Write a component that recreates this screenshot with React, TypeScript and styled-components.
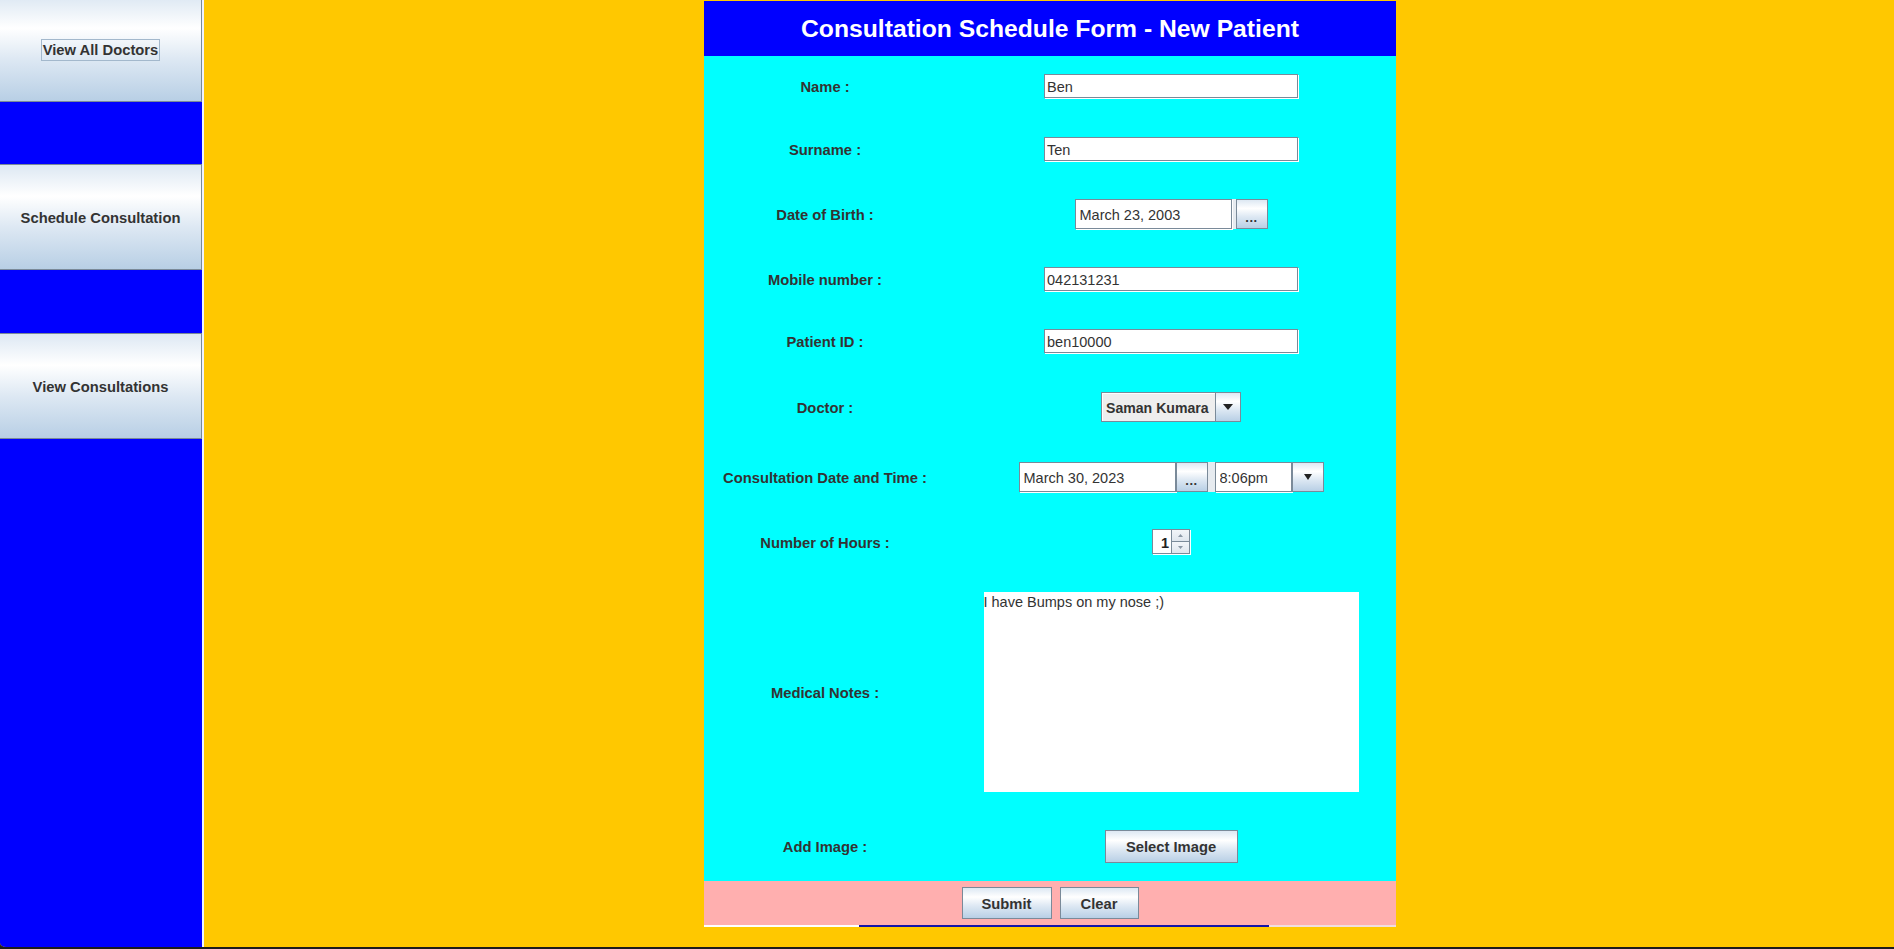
import React from "react";
import styled, { createGlobalStyle } from "styled-components";

const FONT = `"Liberation Sans", Arial, "DejaVu Sans", sans-serif`;

const GlobalStyle = createGlobalStyle`
  html, body { margin: 0; padding: 0; height: 100%; background: #1c1c1c; overflow: hidden; }
  #root { height: 100%; }
  *, *::before, *::after { box-sizing: border-box; }
`;

const OCEAN = `linear-gradient(to bottom, #dde8f3 0%, #ffffff 30%, #dde8f3 60%, #b8cfe5 100%)`;

const Frame = styled.div`
  display: flex;
  width: 1894px;
  height: 949px;
  border-bottom: 2px solid #1c1c1c;
  border-bottom-left-radius: 6px;
  overflow: hidden;
  background: #ffc800;
  font-family: ${FONT};
  color: #333333;
`;

const Sidebar = styled.nav`
  width: 204px;
  flex: none;
  background: #0000ff;
  border-right: 2px solid #eef2ff;
  display: flex;
  flex-direction: column;
  gap: 62px;
  margin-top: -4px;
`;

const NavButton = styled.div<{ $extra?: number }>`
  height: 106px;
  margin-top: ${(p) => p.$extra ?? 0}px;
  border: 1px solid #7a8a99;
  border-left: none;
  background: ${OCEAN};
  display: flex;
  align-items: center;
  justify-content: center;
  padding-top: 2px;
  font-size: 14.75px;
  font-weight: bold;
  color: #333333;
`;

const FocusText = styled.span<{ $focused?: boolean }>`
  line-height: 20px;
  padding: 0 1px;
  outline: ${(p) => (p.$focused ? "1px solid #a3b8cc" : "none")};
`;

const Main = styled.main`
  flex: 1;
  display: flex;
  justify-content: center;
  align-items: flex-start;
  padding-top: 1px;
  padding-left: 2px;
`;

const FormPanel = styled.section`
  width: 692px;
  display: flex;
  flex-direction: column;
`;

const Header = styled.header`
  height: 55px;
  background: #0000ff;
  display: flex;
  align-items: center;
  justify-content: center;
`;

const Title = styled.h1`
  margin: 0;
  font-size: 24.7px;
  font-weight: bold;
  color: #ffffff;
  letter-spacing: 0;
`;

const FormGrid = styled.div`
  background: #00ffff;
  display: grid;
  grid-template-columns: 242px 450px;
  grid-template-rows: 60px 65px 66px 64px 60px 72px 67px 63px 238px 70px;
  align-items: center;
`;

const Label = styled.label`
  justify-self: center;
  padding-top: 2px;
  font-size: 14.75px;
  font-weight: bold;
  color: #333333;
  white-space: nowrap;
`;

const Cell = styled.div`
  justify-self: center;
  display: flex;
  align-items: center;
`;

const TextField = styled.input<{ $w: number; $h: number; $pad?: number }>`
  width: ${(p) => p.$w}px;
  height: ${(p) => p.$h}px;
  border: 1px solid #7a8a99;
  box-shadow: 1px 1px 0 #ffffff;
  background: #ffffff;
  padding: 2px ${(p) => p.$pad ?? 2}px 0;
  margin: 0;
  font-family: ${FONT};
  font-size: 14.5px;
  color: #333333;
  outline: none;
`;

const Picker = styled.div<{ $gap: number }>`
  display: flex;
  height: 30px;
  gap: ${(p) => p.$gap}px;
  background: #e6ebf0;
`;

const Group = styled.div`
  display: flex;
  height: 30px;
`;

const PushButton = styled.button<{ $w: number; $h: number }>`
  width: ${(p) => p.$w}px;
  height: ${(p) => p.$h}px;
  margin: 0;
  padding: 1px 0 0;
  border: 1px solid #7a8a99;
  background: ${OCEAN};
  font-family: ${FONT};
  font-size: 14.75px;
  font-weight: bold;
  color: #333333;
  display: flex;
  align-items: center;
  justify-content: center;
  cursor: default;
`;

const Dots = styled.span`
  padding-top: 6px;
  font-size: 13px;
  letter-spacing: 0.5px;
`;

const Combo = styled.div`
  display: flex;
  width: 140px;
  height: 30px;
  border: 1px solid #7a8a99;
`;

const ComboDisplay = styled.div`
  flex: 1;
  background: #eeeeee;
  box-shadow: inset 1px 1px 0 #ffffff;
  border-right: 1px solid #7a8a99;
  display: flex;
  align-items: center;
  padding: 2px 0 0 4px;
  font-size: 14.1px;
  font-weight: bold;
  color: #333333;
  white-space: nowrap;
  overflow: hidden;
`;

const ArrowPart = styled.div`
  width: 24px;
  background: ${OCEAN};
  display: flex;
  align-items: center;
  justify-content: center;
`;

const Spinner = styled.div`
  display: flex;
  width: 38px;
  height: 25px;
  border: 1px solid #7a8a99;
  box-shadow: 1px 1px 0 #ffffff;
`;

const SpinnerValue = styled.div`
  width: 18px;
  background: #ffffff;
  display: flex;
  align-items: center;
  justify-content: flex-end;
  padding: 2px 2px 0 0;
  font-size: 14.5px;
  font-weight: bold;
  color: #222222;
`;

const SpinnerButtons = styled.div`
  flex: 1;
  display: flex;
  flex-direction: column;
  border-left: 1px solid #7a8a99;
`;

const SpinnerHalf = styled.div<{ $bottom?: boolean }>`
  flex: 1;
  background: linear-gradient(to bottom, #f2f5f9, #dfe6ee);
  border-top: ${(p) => (p.$bottom ? "1px solid #7a8a99" : "none")};
  display: flex;
  align-items: center;
  justify-content: center;
`;

const Notes = styled.textarea`
  width: 375px;
  height: 200px;
  border: none;
  margin: 0;
  padding: 2px 0 0 0;
  resize: none;
  overflow: hidden;
  background: #ffffff;
  font-family: ${FONT};
  font-size: 14.5px;
  line-height: 17px;
  color: #333333;
  outline: none;
`;

const Footer = styled.footer`
  height: 44px;
  background: #ffafaf;
  display: flex;
  align-items: center;
  justify-content: center;
  gap: 8px;
`;

const BottomStrip = styled.div`
  height: 2px;
  background: linear-gradient(
    to right,
    #ffffff 155px,
    #1414a8 155px,
    #1414a8 565px,
    #f2dede 565px
  );
`;

const Triangle = ({ w, h, color }: { w: number; h: number; color: string }) => (
  <svg width={w} height={h} viewBox={`0 0 ${w} ${h}`}>
    <polygon points={`0,0 ${w},0 ${w / 2},${h}`} fill={color} />
  </svg>
);

const UpTriangle = ({ w, h, color }: { w: number; h: number; color: string }) => (
  <svg width={w} height={h} viewBox={`0 0 ${w} ${h}`}>
    <polygon points={`${w / 2},0 ${w},${h} 0,${h}`} fill={color} />
  </svg>
);

export default function App() {
  return (
    <>
      <GlobalStyle />
      <Frame>
        <Sidebar>
          <NavButton>
            <FocusText $focused>View All Doctors</FocusText>
          </NavButton>
          <NavButton>
            <FocusText>Schedule Consultation</FocusText>
          </NavButton>
          <NavButton $extra={1}>
            <FocusText>View Consultations</FocusText>
          </NavButton>
        </Sidebar>
        <Main>
          <FormPanel>
            <Header>
              <Title>Consultation Schedule Form - New Patient</Title>
            </Header>
            <FormGrid>
              <Label>Name :</Label>
              <Cell>
                <TextField $w={254} $h={24} readOnly defaultValue="Ben" />
              </Cell>

              <Label>Surname :</Label>
              <Cell>
                <TextField $w={254} $h={24} readOnly defaultValue="Ten" />
              </Cell>

              <Label>Date of Birth :</Label>
              <Cell>
                <Picker $gap={4}>
                  <TextField $w={157} $h={30} $pad={4} readOnly defaultValue="March 23, 2003" />
                  <PushButton $w={32} $h={30}>
                    <Dots>...</Dots>
                  </PushButton>
                </Picker>
              </Cell>

              <Label>Mobile number :</Label>
              <Cell>
                <TextField $w={254} $h={24} readOnly defaultValue="042131231" />
              </Cell>

              <Label>Patient ID :</Label>
              <Cell>
                <TextField $w={254} $h={24} readOnly defaultValue="ben10000" />
              </Cell>

              <Label>Doctor :</Label>
              <Cell>
                <Combo>
                  <ComboDisplay>Saman Kumara</ComboDisplay>
                  <ArrowPart>
                    <Triangle w={10} h={6} color="#222222" />
                  </ArrowPart>
                </Combo>
              </Cell>

              <Label>Consultation Date and Time :</Label>
              <Cell>
                <Picker $gap={7}>
                  <Group>
                    <TextField $w={157} $h={30} $pad={4} readOnly defaultValue="March 30, 2023" />
                    <PushButton $w={32} $h={30}>
                      <Dots>...</Dots>
                    </PushButton>
                  </Group>
                  <Group>
                    <TextField $w={77} $h={30} $pad={4} readOnly defaultValue="8:06pm" />
                    <PushButton $w={32} $h={30}>
                      <Triangle w={8} h={6} color="#222222" />
                    </PushButton>
                  </Group>
                </Picker>
              </Cell>

              <Label>Number of Hours :</Label>
              <Cell>
                <Spinner>
                  <SpinnerValue>1</SpinnerValue>
                  <SpinnerButtons>
                    <SpinnerHalf>
                      <UpTriangle w={5} h={3} color="#8a97a5" />
                    </SpinnerHalf>
                    <SpinnerHalf $bottom>
                      <Triangle w={5} h={3} color="#8a97a5" />
                    </SpinnerHalf>
                  </SpinnerButtons>
                </Spinner>
              </Cell>

              <Label>Medical Notes :</Label>
              <Cell>
                <Notes readOnly defaultValue="I have Bumps on my nose ;)" />
              </Cell>

              <Label>Add Image :</Label>
              <Cell>
                <PushButton $w={133} $h={33}>Select Image</PushButton>
              </Cell>
            </FormGrid>
            <Footer>
              <PushButton $w={90} $h={32}>Submit</PushButton>
              <PushButton $w={79} $h={32}>Clear</PushButton>
            </Footer>
            <BottomStrip />
          </FormPanel>
        </Main>
      </Frame>
    </>
  );
}
